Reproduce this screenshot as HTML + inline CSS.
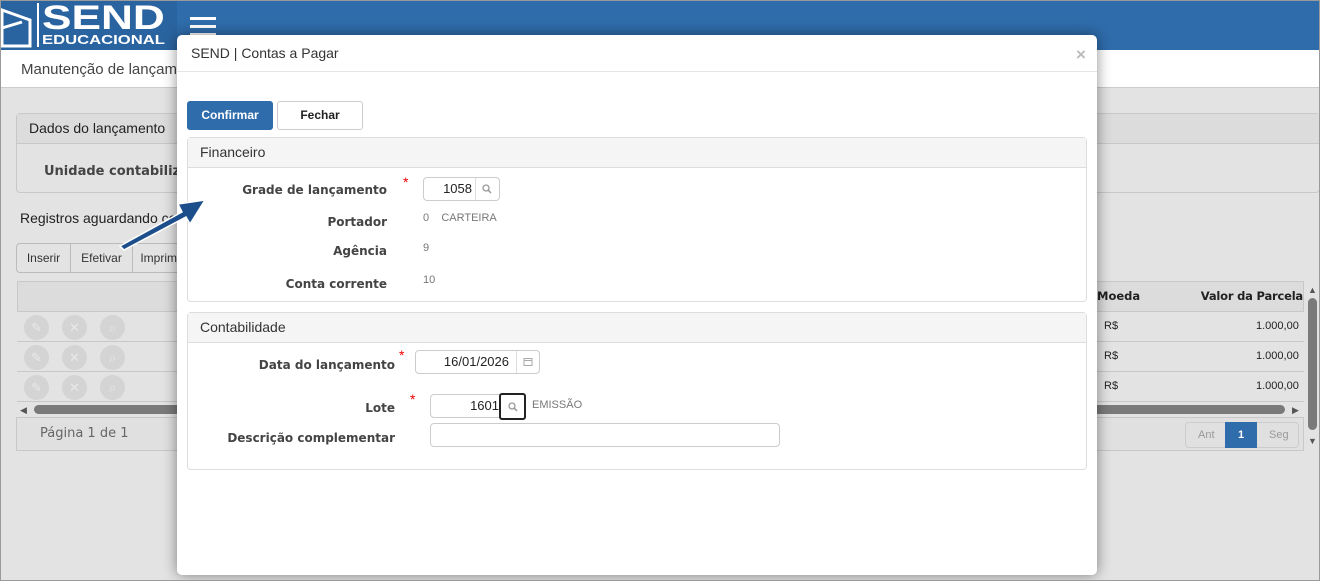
<!DOCTYPE html>
<html><head><meta charset="utf-8"><style>
*{box-sizing:border-box;margin:0;padding:0}
body{width:1320px;height:581px;overflow:hidden;background:#e3e3e3;font-family:"Liberation Sans",sans-serif;position:relative;font-size:12px;color:#333}
.a{position:absolute}
.b{font-family:"DejaVu Sans",sans-serif;font-weight:bold;font-size:12px;color:#444;text-align:right}
.gbtn{position:absolute;top:243px;height:30px;border:1px solid #bbb;background:#e3e3e3;font-size:12px;line-height:28px;text-align:center;color:#333}
.circ{position:absolute;width:25px;height:25px;border-radius:50%;background:#d4d4d4;color:#e8e8e8;text-align:center;line-height:25px;font-size:13px}
.row{position:absolute;left:17px;width:1287px;height:30px;border-bottom:1px solid #c8c8c8}
.inp{position:absolute;border:1px solid #ccc;border-radius:4px;background:#fff;height:24px;font-size:13px;color:#222;text-align:right;line-height:22px}
.gray{color:#777;font-size:11px}
.v{position:absolute;left:1256px;font-size:11px;color:#222}
.m{position:absolute;left:1104px;font-size:11px;color:#222}
</style></head><body>
<div class="a" style="left:0;top:0;width:1320px;height:581px;border:1px solid #9a9a9a;z-index:50;pointer-events:none"></div>
<div class="a" style="left:0;top:0;width:1320px;height:50px;background:#2f6cab"></div>
<div class="a" style="left:0;top:0;width:177px;height:50px;background:#2a64a0"></div>
<svg class="a" style="left:0;top:2px" width="40" height="46"><path d="M2 8 L30 18 L30 44 L2 44 Z M2 26 L22 20" fill="none" stroke="#fff" stroke-width="3"/></svg>
<div class="a" style="left:37px;top:3px;width:2px;height:44px;background:#fff"></div>
<div class="a" style="left:42px;top:-1px;font:bold 34px 'Liberation Sans',sans-serif;color:#fff;transform:scaleX(1.3);transform-origin:left top">SEND</div>
<div class="a" style="left:42px;top:32px;font:bold 13px 'Liberation Sans',sans-serif;color:#fff;transform:scaleX(1.28);transform-origin:left top">EDUCACIONAL</div>
<div class="a" style="left:190px;top:17px;width:26px;height:3px;background:#fff;box-shadow:0 8px 0 #fff,0 16px 0 #fff"></div>
<div class="a" style="left:0;top:50px;width:1320px;height:38px;background:#fff;border-bottom:1px solid #ccc"></div>
<div class="a" style="left:21px;top:61px;font-size:15px;color:#444">Manutenção de lançamentos</div>
<div class="a" style="left:16px;top:113px;width:1304px;height:80px;border:1px solid #c8c8c8;border-radius:4px;background:#e3e3e3"></div>
<div class="a" style="left:17px;top:114px;width:1302px;height:30px;background:#dcdcdc;border-bottom:1px solid #c8c8c8"></div>
<div class="a" style="left:29px;top:120px;font-size:14px;color:#222">Dados do lançamento</div>
<div class="a b" style="left:44px;top:164px;text-align:left;font-size:13px">Unidade contabilizadora</div>
<div class="a" style="left:20px;top:210px;font-size:14px;color:#222">Registros aguardando contabilização</div>
<div class="gbtn" style="left:16px;width:55px;border-radius:4px 0 0 4px">Inserir</div>
<div class="gbtn" style="left:70px;width:63px">Efetivar</div>
<div class="gbtn" style="left:132px;width:60px">Imprimir</div>
<div class="a" style="left:17px;top:281px;width:1287px;height:31px;background:#dcdcdc;border:1px solid #c8c8c8"></div>
<div class="a" style="left:1097px;top:289px;font:bold 11.5px 'DejaVu Sans',sans-serif;color:#222">Moeda</div>
<div class="a" style="left:1196px;top:289px;font:bold 11.5px 'DejaVu Sans',sans-serif;color:#222;width:107px;text-align:right;white-space:nowrap;letter-spacing:-0.2px">Valor da Parcela</div>
<div class="row" style="top:312px"></div><div class="row" style="top:342px"></div><div class="row" style="top:372px"></div>
<div class="circ" style="left:24px;top:315px">✎</div><div class="circ" style="left:62px;top:315px">✕</div><div class="circ" style="left:100px;top:315px">⌕</div>
<div class="circ" style="left:24px;top:345px">✎</div><div class="circ" style="left:62px;top:345px">✕</div><div class="circ" style="left:100px;top:345px">⌕</div>
<div class="circ" style="left:24px;top:375px">✎</div><div class="circ" style="left:62px;top:375px">✕</div><div class="circ" style="left:100px;top:375px">⌕</div>
<div class="m" style="top:320px">R$</div><div class="m" style="top:350px">R$</div><div class="m" style="top:380px">R$</div>
<div class="v" style="top:320px">1.000,00</div><div class="v" style="top:350px">1.000,00</div><div class="v" style="top:380px">1.000,00</div>
<div class="a" style="left:20px;top:405px;font-size:9px;color:#555">◀</div>
<div class="a" style="left:34px;top:405px;width:1251px;height:9px;border-radius:5px;background:#7a7a7a"></div>
<div class="a" style="left:1292px;top:405px;font-size:9px;color:#555">▶</div>
<div class="a" style="left:1308px;top:285px;font-size:9px;color:#555">▲</div>
<div class="a" style="left:1308px;top:298px;width:9px;height:132px;border-radius:5px;background:#7a7a7a"></div>
<div class="a" style="left:1308px;top:436px;font-size:9px;color:#555">▼</div>
<div class="a" style="left:16px;top:417px;width:1288px;height:34px;border:1px solid #c8c8c8;background:#e0e0e0"></div>
<div class="a" style="left:40px;top:426px;font:13px 'DejaVu Sans',sans-serif;color:#666">Página 1 de 1</div>
<div class="a" style="left:1185px;top:422px;width:114px;height:26px;border:1px solid #ccc;border-radius:4px"></div>
<div class="a" style="left:1198px;top:429px;font-size:11px;color:#999">Ant</div>
<div class="a" style="left:1225px;top:422px;width:32px;height:26px;background:#2f6cab;color:#fff;text-align:center;line-height:26px;font-size:11px;font-weight:bold">1</div>
<div class="a" style="left:1269px;top:429px;font-size:11px;color:#999">Seg</div>
<svg class="a" style="left:110px;top:190px;z-index:20" width="100" height="70"><path d="M10 56 L72 22 L68 14 L95 10 L80 34 L76 27 L14 60 Z" fill="#1b4e8a" stroke="#fff" stroke-width="1.5"/></svg>
<div class="a" style="left:177px;top:35px;width:920px;height:540px;background:#fff;border-radius:5px;box-shadow:0 0 14px rgba(0,0,0,.45);z-index:10">
 <div class="a" style="left:14px;top:10px;font-size:14px;color:#333">SEND | Contas a Pagar</div>
 <div class="a" style="left:899px;top:10px;font-size:17px;color:#bbb;font-weight:bold">×</div>
 <div class="a" style="left:0;top:36px;width:920px;height:1px;background:#e5e5e5"></div>
 <div class="a" style="left:10px;top:66px;width:86px;height:29px;background:#2f6cab;border-radius:3px;color:#fff;font-weight:bold;font-size:12px;text-align:center;line-height:29px">Confirmar</div>
 <div class="a" style="left:100px;top:66px;width:86px;height:29px;border:1px solid #ccc;border-radius:3px;color:#222;font-weight:bold;font-size:12px;text-align:center;line-height:27px">Fechar</div>
 <div class="a" style="left:10px;top:102px;width:900px;height:165px;border:1px solid #ddd;border-radius:4px"></div>
 <div class="a" style="left:11px;top:103px;width:898px;height:30px;background:#f5f5f5;border-bottom:1px solid #ddd"></div>
 <div class="a" style="left:23px;top:109px;font-size:14px;color:#333">Financeiro</div>
 <div class="a b" style="right:710px;top:148px">Grade de lançamento</div>
 <div class="a" style="left:226px;top:139px;color:#e00;font-size:14px">*</div>
 <div class="inp" style="left:246px;top:142px;width:77px;padding-right:27px">1058</div>
 <div class="a" style="left:298px;top:143px;width:1px;height:22px;background:#ddd"></div>
 <svg class="a" style="left:305px;top:149px" width="10" height="10"><circle cx="4" cy="4" r="3" fill="none" stroke="#999" stroke-width="1.3"/><path d="M6.2 6.2 L9 9" stroke="#999" stroke-width="1.5"/></svg>
 <div class="a b" style="right:710px;top:180px">Portador</div>
 <div class="a gray" style="left:246px;top:177px">0 &nbsp;&nbsp;&nbsp;CARTEIRA</div>
 <div class="a b" style="right:710px;top:209px">Agência</div>
 <div class="a gray" style="left:246px;top:207px">9</div>
 <div class="a b" style="right:710px;top:242px">Conta corrente</div>
 <div class="a gray" style="left:246px;top:239px">10</div>
 <div class="a" style="left:10px;top:277px;width:900px;height:158px;border:1px solid #ddd;border-radius:4px"></div>
 <div class="a" style="left:11px;top:278px;width:898px;height:30px;background:#f5f5f5;border-bottom:1px solid #ddd"></div>
 <div class="a" style="left:23px;top:284px;font-size:14px;color:#333">Contabilidade</div>
 <div class="a b" style="right:702px;top:323px">Data do lançamento</div>
 <div class="a" style="left:222px;top:312px;color:#e00;font-size:14px">*</div>
 <div class="inp" style="left:238px;top:315px;width:125px;padding-right:30px">16/01/2026</div>
 <div class="a" style="left:339px;top:316px;width:1px;height:22px;background:#ddd"></div>
 <svg class="a" style="left:346px;top:322px" width="10" height="10"><rect x="1" y="1.5" width="8" height="7" fill="none" stroke="#aaa"/><path d="M1 3.5 H9" stroke="#aaa"/></svg>
 <div class="a b" style="right:702px;top:366px">Lote</div>
 <div class="a" style="left:233px;top:356px;color:#e00;font-size:14px">*</div>
 <div class="inp" style="left:253px;top:359px;width:95px;padding-right:25px">1601</div>
 <div class="a" style="left:322px;top:358px;width:27px;height:27px;border:2px solid #222;border-radius:3px;background:#fff"></div>
 <svg class="a" style="left:331px;top:367px" width="10" height="10"><circle cx="4" cy="4" r="3" fill="none" stroke="#999" stroke-width="1.3"/><path d="M6.2 6.2 L9 9" stroke="#999" stroke-width="1.5"/></svg>
 <div class="a gray" style="left:355px;top:364px">EMISSÃO</div>
 <div class="a b" style="right:702px;top:396px">Descrição complementar</div>
 <div class="inp" style="left:253px;top:388px;width:350px"></div>
</div>
</body></html>
